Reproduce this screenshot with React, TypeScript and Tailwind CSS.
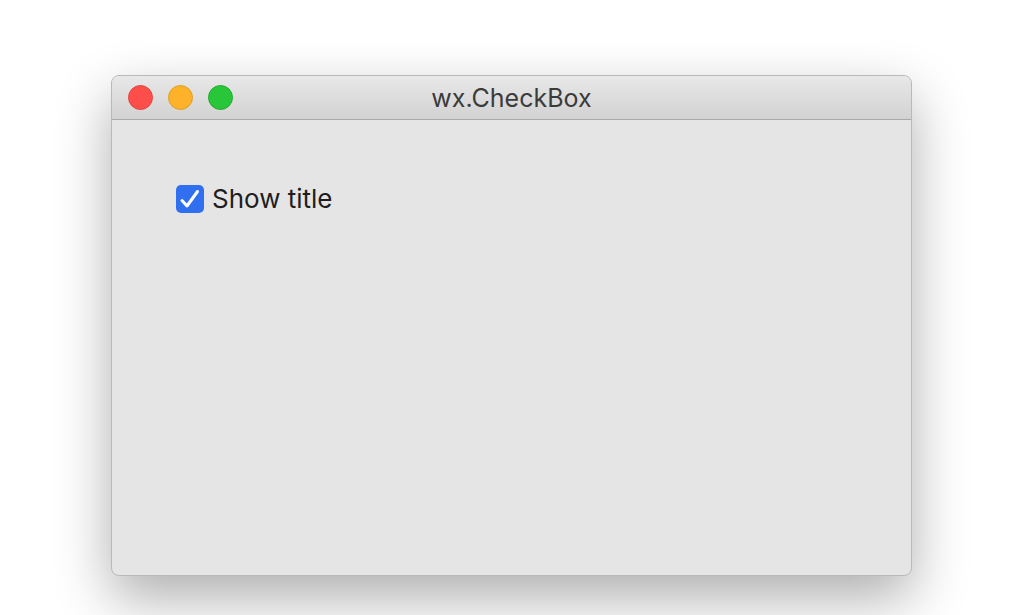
export default function App() {
  return (
    <div
      className="w-[1024px] h-[615px] bg-white pt-[75px] pl-[111px] overflow-hidden"
      style={{ fontFamily: 'Inter, "Liberation Sans", Arial, sans-serif' }}
    >
      {/* Window */}
      <div className="w-[801px] h-[501px] rounded-[8px] border border-[#b9b9b9] bg-[#e5e5e5] shadow-[0_22px_55px_rgba(0,0,0,0.32)] flex flex-col overflow-hidden">
        {/* Title bar */}
        <div className="relative h-[44px] flex items-center px-[16px] gap-[15px] bg-gradient-to-b from-[#e8e8e8] to-[#d2d2d2] border-b border-[#a9a9a9]">
          <div className="w-[25px] h-[25px] rounded-full bg-[#fd4e49] border border-[#e2463f]" />
          <div className="w-[25px] h-[25px] rounded-full bg-[#fdb22a] border border-[#e09e24]" />
          <div className="w-[25px] h-[25px] rounded-full bg-[#28c639] border border-[#24ab31]" />
          <div className="absolute inset-0 flex items-center justify-center pt-[2px] text-[25px] text-[#3b3b3b] pointer-events-none">
            wx.CheckBox
          </div>
        </div>
        {/* Content */}
        <div className="flex-1 pt-[65px] pl-[64px]">
          <div className="flex items-center gap-[8px]">
            <div className="w-[28px] h-[28px] rounded-[5px] bg-[#2f6ff0] flex items-center justify-center">
              <svg width="28" height="28" viewBox="0 0 28 28" fill="none">
                <path
                  d="M6 15.5 L11 21 L21.5 6.5"
                  stroke="white"
                  strokeWidth="3"
                  strokeLinecap="round"
                  strokeLinejoin="round"
                />
              </svg>
            </div>
            <span className="text-[26px] text-[#1e1e1e] leading-none">Show title</span>
          </div>
        </div>
      </div>
    </div>
  );
}
